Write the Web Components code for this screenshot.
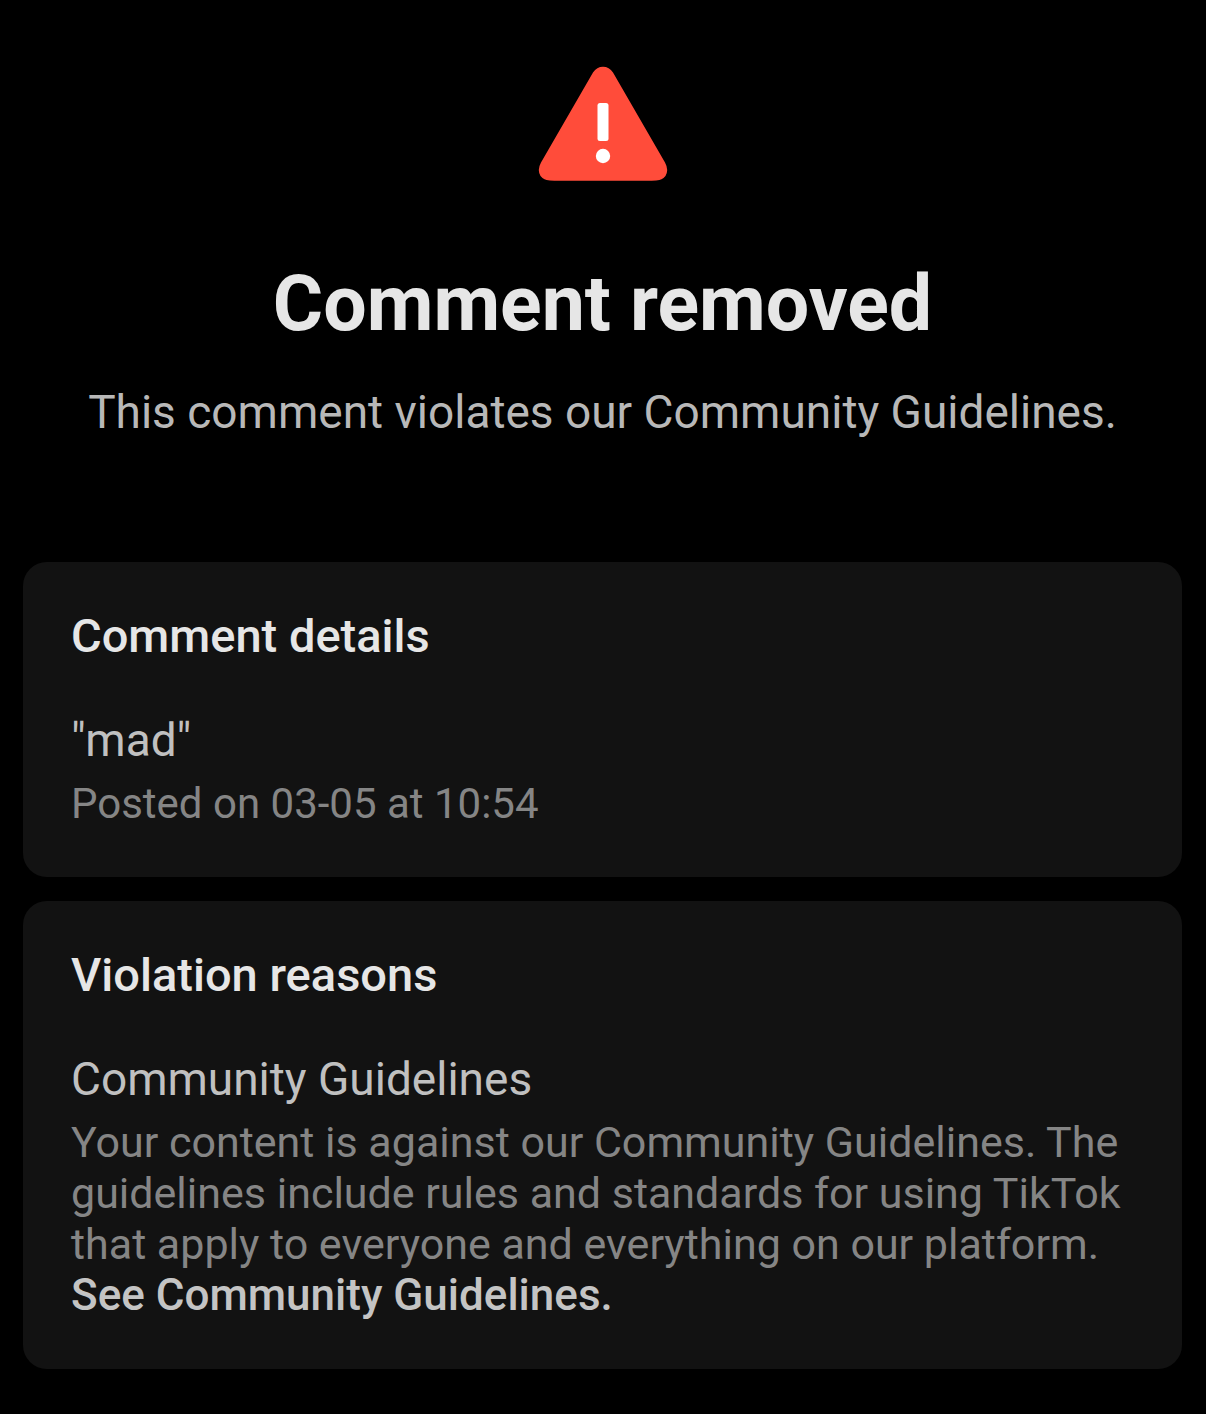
<!DOCTYPE html>
<html lang="en">
<head>
<meta charset="utf-8">
<meta name="viewport" content="width=device-width, initial-scale=1">
<title>Comment removed</title>
<style>
  body {
    margin: 0;
    background: #000;
    color: #e6e6e6;
    font-family: Roboto, "Liberation Sans", sans-serif;
  }
</style>
</head>
<body>
<violation-page></violation-page>

<script>
// Red triangle with the exclamation mark
class WarningIcon extends HTMLElement {
  constructor() {
    super();
    this.attachShadow({ mode: "open" });
    this.shadowRoot.innerHTML = `
      <style>
        :host { display: block; }
        svg { display: block; width: 130px; height: 116px; }
      </style>
      <svg viewBox="0 0 130 116" role="img" aria-label="Warning">
        <path fill="#ff4c3a" d="M55 6.5Q58.8 .7 65 .7Q71.2 .7 75 6.5L127 96.5Q129.2 100.5 129.2 104Q129 110.5 123.5 113.2Q120.5 114.7 108 114.7H22Q9.5 114.7 6.5 113.2Q1 110.5 .8 104Q.8 100.5 3 96.500Z"/>
        <rect fill="#fff" x="59.5" y="37" width="11" height="38" rx="2.5"/>
        <circle fill="#fff" cx="65" cy="90" r="7.2"/>
      </svg>
    `;
  }
}
customElements.define("warning-icon", WarningIcon);

// Icon, title and the message passed in the default slot
class StatusHeader extends HTMLElement {
  constructor() {
    super();
    this.attachShadow({ mode: "open" });
    this.shadowRoot.innerHTML = `
      <style>
        :host { display: block; }
        header {
          display: flex;
          flex-direction: column;
          align-items: center;
          padding: 66px 0 122px;
          text-align: center;
        }
        h1 {
          margin: 78px 0 36px;
          font-size: 77px;
          line-height: 88px;
          font-weight: 700;
        }
        p {
          margin: 0;
          color: #b8b8b8;
          font-size: 46px;
          line-height: 56px;
        }
      </style>
      <header>
        <warning-icon></warning-icon>
        <h1><slot name="title"></slot></h1>
        <p><slot></slot></p>
      </header>
    `;
  }
}
customElements.define("status-header", StatusHeader);

// Dark card: heading, item name and description
class InfoCard extends HTMLElement {
  constructor() {
    super();
    this.attachShadow({ mode: "open" });
    this.shadowRoot.innerHTML = `
      <style>
        :host { display: block; }
        section {
          padding: 48px;
          border-radius: 24px;
          background: #121212;
        }
        h2 {
          margin: 0 0 52px;
          font-size: 47px;
          line-height: 52px;
          font-weight: 500;
        }
        .item {
          margin: 0 0 12px;
          color: #c0c0c0;
          font-size: 46px;
          line-height: 52px;
        }
        .description {
          margin: 0;
          color: #858585;
          font-size: var(--description-size, 43px);
          line-height: 51px;
        }
      </style>
      <section>
        <h2><slot name="heading"></slot></h2>
        <p class="item"><slot name="item"></slot></p>
        <p class="description"><slot></slot></p>
      </section>
    `;
  }
}
customElements.define("info-card", InfoCard);

class ViolationPage extends HTMLElement {
  constructor() {
    super();
    this.attachShadow({ mode: "open" });
    this.shadowRoot.innerHTML = `
      <style>
        :host { display: block; }
        main { padding: 0 24px 44px 23px; }
        .cards {
          display: grid;
          gap: 24px;
        }
        .details { --description-size: 42px; }
        a {
          display: block;
          color: #c4c4c4;
          font-size: 44px;
          font-weight: 500;
          text-decoration: none;
        }
      </style>
      <main>
        <status-header>
          <span slot="title">Comment removed</span>
          This comment violates our Community Guidelines.
        </status-header>
        <div class="cards">
          <info-card class="details">
            <span slot="heading">Comment details</span>
            <span slot="item">"mad"</span>
            Posted on 03-05 at 10:54
          </info-card>
          <info-card>
            <span slot="heading">Violation reasons</span>
            <span slot="item">Community Guidelines</span>
            Your content is against our Community Guidelines. The guidelines include rules and standards for using TikTok that apply to everyone and everything on our platform.
            <a href="#guidelines">See Community Guidelines.</a>
          </info-card>
        </div>
      </main>
    `;
  }
}
customElements.define("violation-page", ViolationPage);
</script>
</body>
</html>
